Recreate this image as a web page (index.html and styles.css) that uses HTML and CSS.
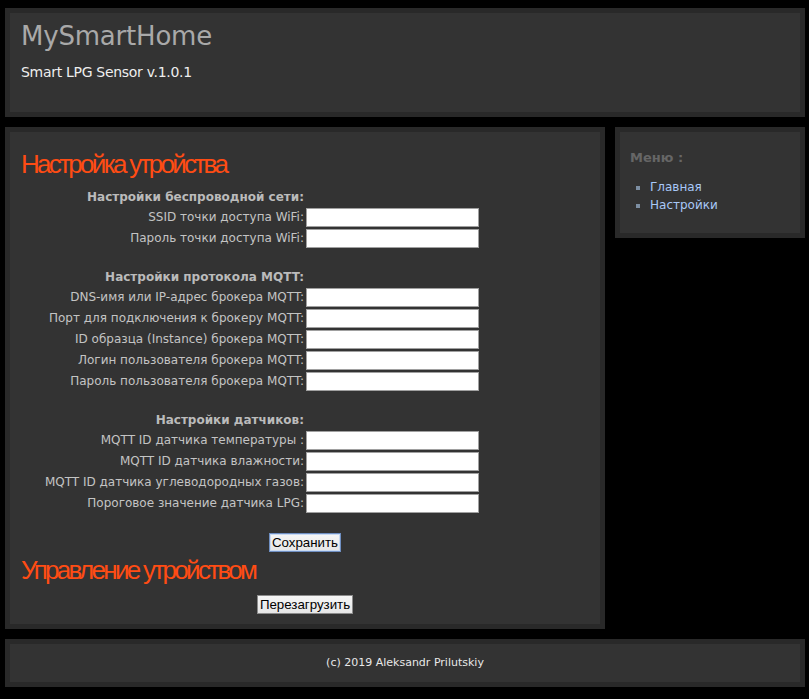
FILE: index.html
```html
<!DOCTYPE html>
<html lang="ru">
<head>
<meta charset="utf-8">
<title>MySmartHome</title>
<link rel="stylesheet" href="styles.css">
</head>
<body>
<div class="page">
  <header class="box header">
    <h1 class="site-title">MySmartHome</h1>
    <p class="site-sub">Smart LPG Sensor v.1.0.1</p>
  </header>

  <div class="columns">
    <main class="box main">
      <h2 class="section-title">Настройка утройства</h2>
      <form class="settings">
        <div class="grp">Настройки беспроводной сети:</div><div></div>
        <label class="lbl">SSID точки доступа WiFi:</label><input class="field" type="text">
        <label class="lbl">Пароль точки доступа WiFi:</label><input class="field" type="password">
        <div class="spacer"></div><div class="spacer"></div>
        <div class="grp">Настройки протокола MQTT:</div><div></div>
        <label class="lbl">DNS-имя или IP-адрес брокера MQTT:</label><input class="field" type="text">
        <label class="lbl">Порт для подключения к брокеру MQTT:</label><input class="field" type="text">
        <label class="lbl">ID образца (Instance) брокера MQTT:</label><input class="field" type="text">
        <label class="lbl">Логин пользователя брокера MQTT:</label><input class="field" type="text">
        <label class="lbl">Пароль пользователя брокера MQTT:</label><input class="field" type="password">
        <div class="spacer"></div><div class="spacer"></div>
        <div class="grp">Настройки датчиков:</div><div></div>
        <label class="lbl">MQTT ID датчика температуры :</label><input class="field" type="text">
        <label class="lbl">MQTT ID датчика влажности:</label><input class="field" type="text">
        <label class="lbl">MQTT ID датчика углеводородных газов:</label><input class="field" type="text">
        <label class="lbl">Пороговое значение датчика LPG:</label><input class="field" type="text">
      </form>
      <div class="actions save-row"><button class="btn btn-default" type="button">Сохранить</button></div>
      <h2 class="section-title title-2">Управление утройством</h2>
      <div class="actions"><button class="btn" type="button">Перезагрузить</button></div>
    </main>

    <aside class="box sidebar">
      <h3 class="menu-title">Меню :</h3>
      <ul class="menu">
        <li><a href="#">Главная</a></li>
        <li><a href="#">Настройки</a></li>
      </ul>
    </aside>
  </div>

  <footer class="box footer">(c) 2019 Aleksandr Prilutskiy</footer>
</div>
</body>
</html>
```

FILE: styles.css
```css
html, body {
  margin: 0;
  padding: 0;
  background: #000;
}

body {
  font-family: "DejaVu Sans", Verdana, sans-serif;
  color: #ccc;
}

.page {
  width: 800px;
  margin: 8px 0 0 5px;
  display: flex;
  flex-direction: column;
  gap: 10px;
}

.box {
  background: #333;
  border: 5px solid #292929;
  box-sizing: border-box;
}

/* header */
.header {
  height: 109px;
  padding: 10px 11px;
}

.site-title {
  margin: 0;
  font-weight: normal;
  font-size: 26px;
  line-height: 26px;
  color: #a9a9a9;
  letter-spacing: -0.2px;
}

.site-sub {
  margin: 15px 0 0;
  font-size: 14px;
  line-height: 16px;
  color: #eee;
  letter-spacing: -0.3px;
}

/* columns */
.columns {
  display: flex;
  gap: 10px;
  align-items: flex-start;
}

.main {
  width: 600px;
  height: 502px;
  padding: 17px 11px 0;
}

.section-title {
  margin: 0;
  font-family: "Liberation Sans", Arial, sans-serif;
  font-weight: normal;
  font-size: 26px;
  line-height: 30px;
  color: #ff4c14;
  letter-spacing: -2.7px;
}

.settings {
  display: grid;
  grid-template-columns: 283px 173px;
  column-gap: 2px;
  row-gap: 2px;
  margin-top: 10px;
  font-size: 12px;
}

.grp {
  height: 17px;
  line-height: 17px;
  text-align: right;
  font-weight: bold;
  color: #bbb;
  white-space: nowrap;
}

.lbl {
  height: 19px;
  line-height: 19px;
  text-align: right;
  color: #c4c4c4;
  white-space: nowrap;
}

.spacer {
  height: 17px;
}

.field {
  height: 19px;
  width: 173px;
  box-sizing: border-box;
  margin: 0;
  padding: 1px 3px;
  border: 1px solid #a0a0a0;
  background: #fff;
  font: 12px "Liberation Sans", Arial, sans-serif;
}

.actions {
  display: flex;
  justify-content: center;
}

.save-row {
  margin-top: 20px;
}

.title-2 {
  margin-top: 3px;
}

.btn {
  font: 13.3px "Liberation Sans", Arial, sans-serif;
  color: #000;
  height: 19px;
  padding: 0 2px;
  margin: 0;
  background: linear-gradient(#f6f6f6, #e6e6e6);
  border: 1px solid #8c8c8c;
  border-radius: 0;
  line-height: 16px;
}

.btn-default {
  border: 1px solid #6f8fc2;
  box-shadow: inset 0 0 0 1px #c9daf2;
  padding: 0 2px;
}

.title-2 + .actions {
  margin-top: 10px;
}

/* sidebar */
.sidebar {
  width: 190px;
  height: 111px;
  padding: 18px 10px 0;
}

.menu-title {
  margin: 0;
  font-size: 13px;
  line-height: 16px;
  font-weight: bold;
  color: #666;
}

.menu {
  margin: 12px 0 0;
  padding: 0 0 0 20px;
  list-style: square;
  font-size: 12px;
  line-height: 18px;
  color: #7d8fa3;
}

.menu a {
  color: #a8c8f8;
  text-decoration: none;
}

/* footer */
.footer {
  height: 48px;
  line-height: 38px;
  text-align: center;
  font-size: 11px;
  color: #e8e8e8;
}
```
